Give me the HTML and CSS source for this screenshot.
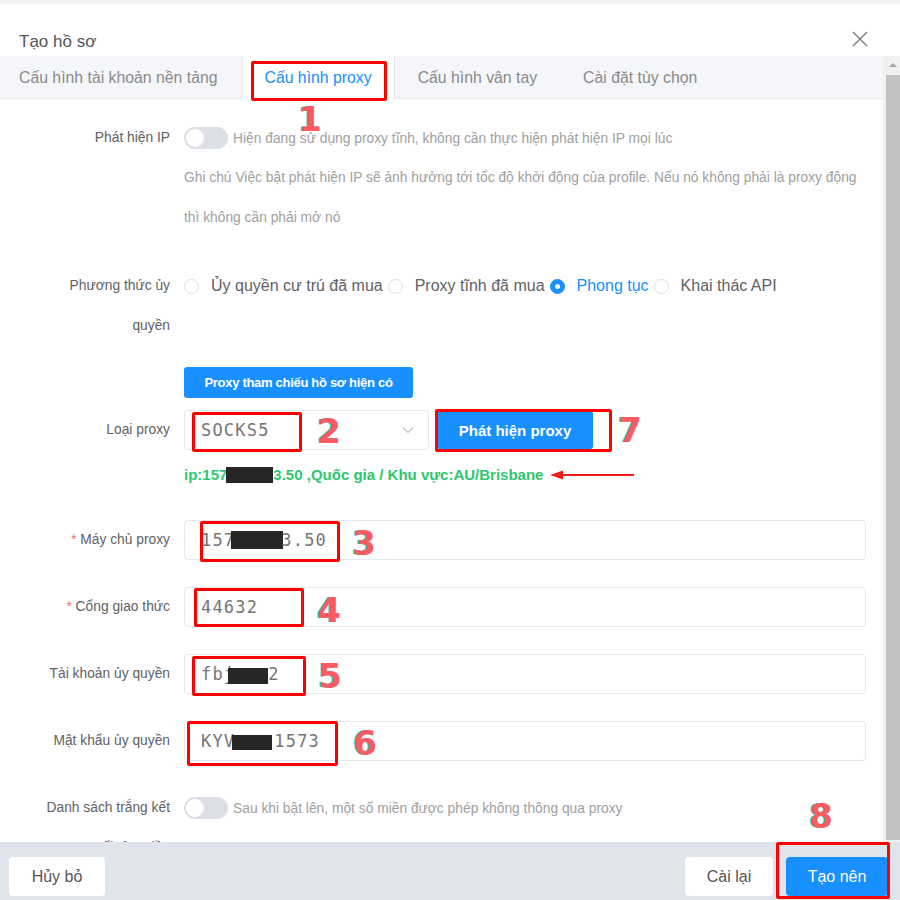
FILE: index.html
```html
<!DOCTYPE html>
<html lang="vi">
<head>
<meta charset="utf-8">
<title>Tạo hồ sơ</title>
<link rel="stylesheet" href="styles.css">
</head>
<body>
<div class="page">
  <div class="topstrip"></div>
  <div class="dialog">
    <header class="dlg-header">
      <h1 class="dlg-title">Tạo hồ sơ</h1>
      <span class="close-btn">
        <svg width="16" height="16" viewBox="0 0 16 16"><path d="M1 1L15 15M15 1L1 15" stroke="#7a7a7a" stroke-width="1.4" fill="none"/></svg>
      </span>
    </header>
    <div class="dlg-main">
      <div class="dlg-col">
        <nav class="tabs">
          <div class="tab tab-first">Cấu hình tài khoản nền tảng</div>
          <div class="tab tab-active">Cấu hình proxy</div>
          <div class="tab">Cấu hình vân tay</div>
          <div class="tab">Cài đặt tùy chọn</div>
        </nav>
        <div class="content">
          <div class="form-item item-ip">
            <label class="form-label">Phát hiện IP</label>
            <div class="form-control">
              <div class="switch-line">
                <span class="switch"></span>
                <span class="hint">Hiện đang sử dụng proxy tĩnh, không cần thực hiện phát hiện IP mọi lúc</span>
              </div>
              <div class="note">Ghi chú Việc bật phát hiện IP sẽ ảnh hưởng tới tốc độ khởi động của profile. Nếu nó không phải là proxy động</div>
              <div class="note">thì không cần phải mở nó</div>
            </div>
          </div>

          <div class="form-item item-method">
            <label class="form-label">Phương thức ủy<br>quyền</label>
            <div class="form-control">
              <div class="radio-group">
                <span class="radio"><span class="radio-dot"></span>Ủy quyền cư trú đã mua</span>
                <span class="radio"><span class="radio-dot"></span>Proxy tĩnh đã mua</span>
                <span class="radio radio-checked"><span class="radio-dot"></span>Phong tục</span>
                <span class="radio"><span class="radio-dot"></span>Khai thác API</span>
              </div>
            </div>
          </div>

          <div class="form-item item-ref">
            <span class="form-label"></span>
            <div class="form-control">
              <button class="btn-ref">Proxy tham chiếu hồ sơ hiện có</button>
            </div>
          </div>

          <div class="form-item item-type">
            <label class="form-label">Loại proxy</label>
            <div class="form-control">
              <div class="type-line">
                <div class="select">
                  <span class="mono">SOCKS5</span>
                  <svg class="chev" width="12" height="8" viewBox="0 0 12 8"><path d="M1 1.5L6 6.5L11 1.5" stroke="#c0c4cc" stroke-width="1.2" fill="none"/></svg>
                </div>
                <button class="btn-detect">Phát hiện proxy</button>
              </div>
              <div class="result">ip:157<span class="redact redact-ip"></span>3.50 ,Quốc gia / Khu vực:AU/Brisbane</div>
            </div>
          </div>

          <div class="form-item">
            <label class="form-label"><span class="req">*</span> Máy chủ proxy</label>
            <div class="form-control">
              <div class="input"><span class="mono">157<span class="redact redact-host"></span>3.50</span></div>
            </div>
          </div>

          <div class="form-item">
            <label class="form-label"><span class="req">*</span> Cổng giao thức</label>
            <div class="form-control">
              <div class="input"><span class="mono">44632</span></div>
            </div>
          </div>

          <div class="form-item">
            <label class="form-label">Tài khoản ủy quyền</label>
            <div class="form-control">
              <div class="input"><span class="mono">fbj<span class="redact redact-user"></span>2</span></div>
            </div>
          </div>

          <div class="form-item">
            <label class="form-label">Mật khẩu ủy quyền</label>
            <div class="form-control">
              <div class="input"><span class="mono">KYV<span class="redact redact-pass"></span>1573</span></div>
            </div>
          </div>

          <div class="form-item">
            <label class="form-label">Danh sách trắng kết<br>nối tên miền</label>
            <div class="form-control">
              <div class="switch-line">
                <span class="switch"></span>
                <span class="hint">Sau khi bật lên, một số miền được phép không thông qua proxy</span>
              </div>
            </div>
          </div>
        </div>
      </div>
      <div class="scrollbar">
        <span class="sb-arrow"></span>
        <span class="sb-thumb"></span>
      </div>
    </div>
    <footer class="dlg-footer">
      <button class="btn btn-default btn-cancel">Hủy bỏ</button>
      <div class="footer-right">
        <button class="btn btn-default btn-reset">Cài lại</button>
        <button class="btn btn-primary btn-create">Tạo nên</button>
      </div>
    </footer>
  </div>

  <div class="annot-box box-1"></div>
  <div class="annot-box box-2"></div>
  <div class="annot-box box-3"></div>
  <div class="annot-box box-4"></div>
  <div class="annot-box box-5"></div>
  <div class="annot-box box-6"></div>
  <div class="annot-box box-7"></div>
  <div class="annot-box box-8"></div>
  <span class="annot-num num-1">1</span>
  <span class="annot-num num-2">2</span>
  <span class="annot-num num-3">3</span>
  <span class="annot-num num-4">4</span>
  <span class="annot-num num-5">5</span>
  <span class="annot-num num-6">6</span>
  <span class="annot-num num-7">7</span>
  <span class="annot-num num-8">8</span>
  <svg class="annot-arrow" width="86" height="12" viewBox="0 0 86 12">
    <path d="M10 6H84" stroke="#ee1c1c" stroke-width="2.2"/>
    <path d="M0 6L13 1.5V10.5Z" fill="#ee1c1c"/>
  </svg>
</div>
</body>
</html>
```

FILE: styles.css
```css
* { box-sizing: border-box; margin: 0; padding: 0; }
html, body { width: 900px; height: 900px; overflow: hidden; background: #fff; }
body { font-family: "Liberation Sans", Arial, sans-serif; color: #606266; }

.page { position: relative; width: 900px; height: 900px; }
.topstrip { height: 4px; background: #f1f1f1; }
.dialog { height: 896px; display: flex; flex-direction: column; background: #fff; }

.dlg-header {
  height: 52px; display: flex; justify-content: space-between; align-items: center;
  padding: 27px 32px 3px 19px;
}
.dlg-title { font-size: 17px; font-weight: normal; line-height: 22px; color: #555; }
.close-btn { width: 16px; height: 16px; display: flex; margin-bottom: 6px; }

.dlg-main { height: 786px; display: flex; }
.dlg-col { flex: 1; min-width: 0; display: flex; flex-direction: column; }

.tabs { height: 43px; flex-shrink: 0; display: flex; background: #f5f6fa; border-bottom: 1px solid #e8eaf0; }
.tab { padding: 2px 23px 0 23px; font-size: 15.8px; line-height: 40px; color: #8a8a8a; white-space: nowrap; }
.tab-first { padding-left: 19px; padding-right: 24px; }
.tab-active {
  background: #fff; color: #1890ff; height: 43px; margin-bottom: -1px; padding: 2px 22px 0 22px;
  border-left: 1px solid #e6e8ee; border-right: 1px solid #e6e8ee;
}

.content { flex: 1; overflow: hidden; padding: 19px 17px 0 0; }

.scrollbar { width: 17px; flex-shrink: 0; background: #f1f1f1; display: flex; flex-direction: column; align-items: flex-end; }
.sb-arrow {
  width: 0; height: 0; margin: 7px 3px 8px 0;
  border-left: 4px solid transparent; border-right: 4px solid transparent; border-bottom: 4px solid #a3a3a3;
}
.sb-thumb { width: 14px; flex: 1; background: #c1c1c1; margin-bottom: 2px; }

.form-item { display: flex; margin-bottom: 27px; }
.form-label {
  width: 184px; flex-shrink: 0; padding: 0 14px 0 30px; text-align: right;
  font-size: 13.8px; line-height: 40px; color: #5f6166; white-space: nowrap;
}
.form-control { flex: 1; min-width: 0; }
.req { color: #f56c6c; }

.item-ip { margin-bottom: 28px; }
.item-method { margin-bottom: 21px; }
.item-ref { margin-bottom: 12px; }
.item-type { margin-bottom: 30px; }

.switch-line { display: flex; align-items: center; height: 40px; gap: 5px; }
.switch { position: relative; width: 44px; height: 22px; border-radius: 11px; background: #dcdfe6; flex-shrink: 0; }
.switch::after {
  content: ""; position: absolute; left: 2px; top: 2px; width: 18px; height: 18px;
  border-radius: 50%; background: #fff;
}
.hint { font-size: 13.8px; color: #a0a0a0; white-space: nowrap; }
.note { font-size: 13.8px; line-height: 40px; color: #a0a0a0; white-space: nowrap; }

.radio-group { display: flex; align-items: center; height: 40px; font-size: 16px; color: #606266; white-space: nowrap; }
.radio { display: flex; align-items: center; margin-right: 5px; }
.radio-dot {
  width: 15px; height: 15px; border-radius: 50%; border: 1px solid #dcdfe6; background: #fff;
  margin-right: 12px; display: flex; align-items: center; justify-content: center;
}
.radio-checked { color: #1890ff; }
.radio-checked .radio-dot { background: #1890ff; border-color: #1890ff; }
.radio-checked .radio-dot::after { content: ""; width: 5px; height: 5px; border-radius: 50%; background: #fff; }

.btn-ref {
  width: 229px; height: 31px; border: 0; border-radius: 3px; background: #1890ff; color: #fff;
  font-family: "Liberation Sans", Arial, sans-serif; font-size: 13px; font-weight: bold; letter-spacing: -0.3px;
}

.type-line { display: flex; align-items: center; gap: 8px; }
.select {
  width: 245px; height: 40px; border: 1px solid #e4e7ed; border-radius: 4px;
  display: flex; align-items: center; justify-content: space-between; padding: 0 14px 0 16px;
}
.btn-detect {
  width: 156px; height: 38px; border: 0; border-radius: 3px; background: #1890ff; color: #fff;
  font-family: "Liberation Sans", Arial, sans-serif; font-size: 15px; font-weight: bold;
}
.result { margin-top: 10px; line-height: 30px; font-size: 15px; font-weight: bold; color: #2dc76d; white-space: nowrap; }

.input {
  height: 40px; border: 1px solid #e4e7ed; border-radius: 4px;
  display: flex; align-items: center; padding: 0 16px;
}
.mono {
  font-family: "DejaVu Sans Mono", "Liberation Mono", monospace; font-size: 17px; letter-spacing: 1.2px;
  color: #767676; white-space: nowrap;
}

.redact { display: inline-block; vertical-align: middle; background: #262626; }
.redact-ip { width: 47px; height: 16px; margin: -3px 0 0 -1px; }
.redact-host { width: 52px; height: 18px; margin: -2px -2px 0 -4px; }
.redact-user { width: 40px; height: 16px; margin: 2px 0 0 -7px; }
.redact-pass { width: 40px; height: 15px; margin: 0 2px 0 -3px; }

.dlg-footer {
  height: 58px; flex-shrink: 0; background: #e0e4ec; display: flex; justify-content: space-between;
  align-items: flex-start; padding: 15px 12px 0 9px;
}
.footer-right { display: flex; gap: 13px; }
.btn {
  height: 39px; border: 0; border-radius: 4px; font-family: "Liberation Sans", Arial, sans-serif; font-size: 16px;
}
.btn-default { background: #fff; color: #555; }
.btn-primary { background: #1890ff; color: #fff; }
.btn-cancel { width: 96px; }
.btn-reset { width: 88px; }
.btn-create { width: 102px; }

/* annotations overlaid on the screenshot */
.annot-box { position: absolute; border: 3px solid #ff0000; border-radius: 2px; }
.box-1 { left: 251px; top: 61px; width: 136px; height: 40px; }
.box-2 { left: 192px; top: 412px; width: 110px; height: 40px; }
.box-3 { left: 200px; top: 521px; width: 140px; height: 41px; }
.box-4 { left: 194px; top: 588px; width: 110px; height: 39px; }
.box-5 { left: 192px; top: 656px; width: 114px; height: 40px; }
.box-6 { left: 187px; top: 721px; width: 151px; height: 45px; }
.box-7 { left: 435px; top: 409px; width: 177px; height: 43px; }
.box-8 { left: 776px; top: 842px; width: 114px; height: 57px; }

.annot-num {
  position: absolute; width: 24px; text-align: center;
  font-family: "DejaVu Sans", sans-serif; font-weight: bold; font-size: 34px; line-height: 34px;
  color: #ff5a5f; text-shadow: -1.5px 0 0 #2fd3d3;
}
.num-1 { left: 298px; top: 102px; }
.num-2 { left: 317px; top: 414px; }
.num-3 { left: 352px; top: 526px; }
.num-4 { left: 317px; top: 593px; }
.num-5 { left: 318px; top: 659px; }
.num-6 { left: 353px; top: 726px; }
.num-7 { left: 618px; top: 413px; }
.num-8 { left: 809px; top: 799px; }

.annot-arrow { position: absolute; left: 550px; top: 469px; }
```
